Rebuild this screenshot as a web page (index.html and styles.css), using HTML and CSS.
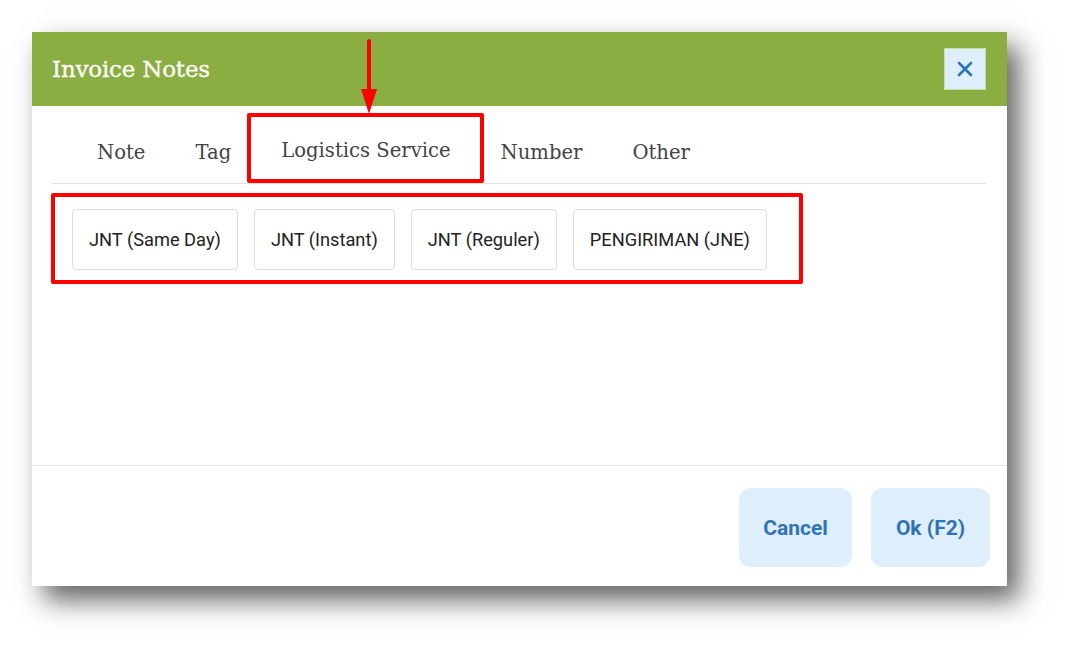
FILE: index.html
```html
<!DOCTYPE html>
<html>
<head>
<meta charset="utf-8">
<link rel="stylesheet" href="styles.css">
</head>
<body>
<div class="dialog">
  <div class="header">
    <div class="title">Invoice Notes</div>
    <button class="close" aria-label="Close">
      <svg width="16" height="16" viewBox="0 0 16 16"><path d="M2 2 L14 14 M14 2 L2 14" stroke="#2f74b5" stroke-width="2.6" stroke-linecap="round"/></svg>
    </button>
  </div>
  <div class="tabs">
    <div class="tab">Note</div>
    <div class="tab">Tag</div>
    <div class="tab active">Logistics Service</div>
    <div class="tab">Number</div>
    <div class="tab">Other</div>
  </div>
  <div class="content">
    <div class="chips">
      <div class="chip">JNT (Same Day)</div>
      <div class="chip">JNT (Instant)</div>
      <div class="chip">JNT (Reguler)</div>
      <div class="chip">PENGIRIMAN (JNE)</div>
    </div>
  </div>
  <div class="footer">
    <button class="btn cancel">Cancel</button>
    <button class="btn ok">Ok (F2)</button>
  </div>
</div>
<div class="mark mark-tab"></div>
<div class="mark mark-chips"></div>
<div class="arrow">
  <div class="arrow-shaft"></div>
  <div class="arrow-head"></div>
</div>
</body>
</html>
```
FILE: styles.css
```css
html, body {
  margin: 0;
  padding: 0;
  background: #ffffff;
}
body {
  position: relative;
  width: 1072px;
  height: 651px;
  overflow: hidden;
  font-family: Roboto, "Liberation Sans", sans-serif;
}
.dialog {
  margin: 32px 0 0 32px;
  width: 975px;
  height: 554px;
  background: #ffffff;
  display: flex;
  flex-direction: column;
  box-shadow: 12px 14px 26px rgba(0, 0, 0, 0.62);
}
.header {
  height: 74px;
  flex: none;
  background: #8aae42;
  display: flex;
  align-items: center;
  justify-content: space-between;
  padding: 0 21px 0 20px;
}
.title {
  font-family: "DejaVu Serif", serif;
  font-size: 23px;
  color: #ffffff;
  letter-spacing: -0.2px;
  -webkit-text-stroke: 0.3px #ffffff;
}
.close {
  width: 42px;
  height: 42px;
  border: 1px solid #c9e0a4;
  background: #deeefb;
  display: flex;
  align-items: center;
  justify-content: center;
  padding: 0;
}
.tabs {
  flex: none;
  height: 78px;
  box-sizing: border-box;
  margin: 0 21px 0 20px;
  padding: 15px 0 0 20px;
  border-bottom: 1px solid #e0e2e4;
  display: flex;
  align-items: center;
}
.tab {
  font-family: "DejaVu Serif", serif;
  font-size: 19.6px;
  color: #444444;
  padding: 0 25px 0 25px;
}
.tab.active {
  padding-bottom: 4px;
}
.content {
  flex: 1;
  padding: 25px 0 0 40px;
  border-bottom: 1px solid #e3e6ea;
}
.chips {
  display: flex;
  gap: 16px;
}
.chip {
  height: 59px;
  padding: 0 16px;
  border: 1px solid #dddddd;
  border-radius: 4px;
  display: flex;
  align-items: center;
  font-size: 18.25px;
  color: #222222;
}
.footer {
  flex: none;
  height: 120px;
  box-sizing: border-box;
  padding: 22px 17px 0 0;
  display: flex;
  justify-content: flex-end;
  gap: 19px;
}
.btn {
  height: 79px;
  border: none;
  border-radius: 12px;
  background: #deeefb;
  color: #2f74b5;
  font-family: Roboto, "Liberation Sans", sans-serif;
  font-weight: 700;
  font-size: 21px;
}
.cancel { width: 113px; }
.ok { width: 119px; }

/* annotations */
.mark {
  position: absolute;
  border: 4px solid #ff0000;
  border-radius: 2px;
  box-sizing: border-box;
}
.mark-tab {
  left: 247px;
  top: 113px;
  width: 237px;
  height: 70px;
}
.mark-chips {
  left: 51px;
  top: 193px;
  width: 752px;
  height: 91px;
}
.arrow {
  position: absolute;
  left: 360px;
  top: 39px;
  width: 18px;
  height: 75px;
  display: flex;
  flex-direction: column;
  align-items: center;
}
.arrow-shaft {
  width: 4px;
  height: 50px;
  background: #ff0000;
  border-radius: 2px 2px 0 0;
}
.arrow-head {
  width: 0;
  height: 0;
  border-left: 8px solid transparent;
  border-right: 8px solid transparent;
  border-top: 25px solid #ff0000;
}
```
